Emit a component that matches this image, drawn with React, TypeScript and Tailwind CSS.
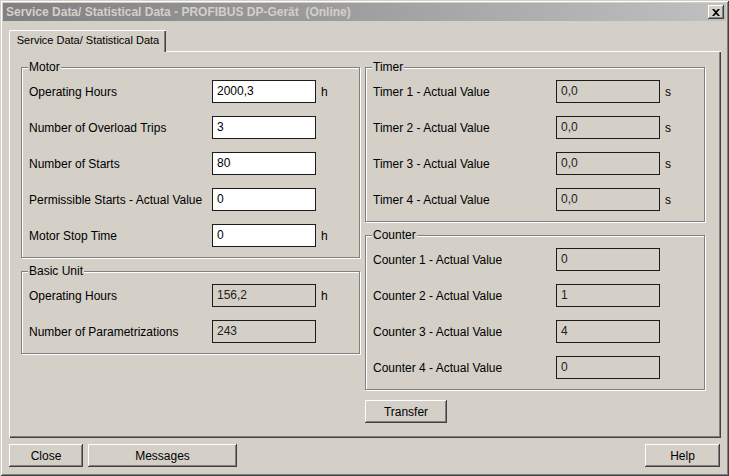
import React from "react";

const font = { fontFamily: '"Liberation Sans", Arial, sans-serif' };

function Btn({ label, w }: { label: string; w: string }) {
  return (
    <div
      className={`${w} h-[23px] flex items-center justify-center text-[12px] text-black bg-[#d4d0c8] shadow-[inset_-1px_-1px_0_#404040,inset_1px_1px_0_#ffffff,inset_-2px_-2px_0_#808080]`}
    >
      {label}
    </div>
  );
}

function Field({ value, editable }: { value: string; editable?: boolean }) {
  return (
    <div
      className={`w-[104px] h-[23px] border border-[#1c1c1c] px-[4px] pt-[2px] text-[12px] leading-[16px] ${
        editable ? "bg-white text-black" : "bg-[#d4d0c8] text-[#222222]"
      }`}
    >
      {value}
    </div>
  );
}

function Row({
  label,
  value,
  unit,
  editable,
}: {
  label: string;
  value: string;
  unit?: string;
  editable?: boolean;
}) {
  return (
    <div className="flex items-center h-[23px]">
      <div className="w-[183px] text-[12px] text-black whitespace-nowrap">{label}</div>
      <Field value={value} editable={editable} />
      {unit && <div className="ml-[5px] text-[12px] text-black">{unit}</div>}
    </div>
  );
}

function Group({
  title,
  children,
}: {
  title: string;
  children: React.ReactNode;
}) {
  return (
    <div className="relative border border-[#808080] shadow-[inset_1px_1px_0_#ffffff,1px_1px_0_#ffffff] pl-[7px] pt-[12px] pb-[10px] flex flex-col gap-[13px]">
      <div className="absolute left-[6px] top-[-8px] px-[1px] bg-[#d4d0c8] text-[12px] leading-[14px] text-black">
        {title}
      </div>
      {children}
    </div>
  );
}

export default function App() {
  return (
    <div
      style={font}
      className="w-[729px] h-[476px] bg-[#d4d0c8] flex flex-col shadow-[inset_1px_1px_0_#d4d0c8,inset_-1px_-1px_0_#404040,inset_2px_2px_0_#ffffff,inset_-2px_-2px_0_#808080] overflow-hidden"
    >
      {/* Title bar */}
      <div className="mx-[3px] mt-[3px] h-[18px] bg-gradient-to-r from-[#808080] to-[#c0c0c0] flex items-center justify-between pl-[3px] pr-[2px]">
        <div className="text-[12px] font-bold text-[#d4d0c8] whitespace-nowrap leading-[14px]">
          Service Data/ Statistical Data - PROFIBUS DP-Gerät&nbsp; (Online)
        </div>
        <div className="w-[16px] h-[14px] bg-[#d4d0c8] flex items-center justify-center shadow-[inset_-1px_-1px_0_#404040,inset_1px_1px_0_#ffffff,inset_-2px_-2px_0_#808080]">
          <svg width="8" height="7" viewBox="0 0 8 7">
            <path d="M0 0h2l2 2 2-2h2L5 3.5 8 7H6L4 5 2 7H0l3-3.5z" fill="#000" />
          </svg>
        </div>
      </div>

      {/* Tab area */}
      <div className="px-[9px] pt-[9px] w-[721px]">
        <div className="relative z-10 -mb-[1px] w-[157px] h-[22px] pb-[2px] bg-[#d4d0c8] flex items-center justify-center text-[11px] text-black border-t border-l border-white shadow-[inset_-1px_0_0_#404040,inset_-2px_0_0_#808080] rounded-tl-[2px]">
          Service Data/ Statistical Data
        </div>
        <div className="h-[387px] w-[712px] border-t border-l border-white shadow-[inset_-1px_-1px_0_#404040,inset_-2px_-2px_0_#808080] pl-[11px] pr-[15px] pt-[15px] flex gap-[5px]">
          {/* Left column */}
          <div className="w-[339px] flex flex-col gap-[13px]">
            <Group title="Motor">
              <Row label="Operating Hours" value="2000,3" unit="h" editable />
              <Row label="Number of Overload Trips" value="3" editable />
              <Row label="Number of Starts" value="80" editable />
              <Row label="Permissible Starts - Actual Value" value="0" editable />
              <Row label="Motor Stop Time" value="0" unit="h" editable />
            </Group>
            <Group title="Basic Unit">
              <Row label="Operating Hours" value="156,2" unit="h" />
              <Row label="Number of Parametrizations" value="243" />
            </Group>
          </div>
          {/* Right column */}
          <div className="w-[340px] flex flex-col gap-[13px]">
            <Group title="Timer">
              <Row label="Timer 1 - Actual Value" value="0,0" unit="s" />
              <Row label="Timer 2 - Actual Value" value="0,0" unit="s" />
              <Row label="Timer 3 - Actual Value" value="0,0" unit="s" />
              <Row label="Timer 4 - Actual Value" value="0,0" unit="s" />
            </Group>
            <Group title="Counter">
              <Row label="Counter 1 - Actual Value" value="0" />
              <Row label="Counter 2 - Actual Value" value="1" />
              <Row label="Counter 3 - Actual Value" value="4" />
              <Row label="Counter 4 - Actual Value" value="0" />
            </Group>
            <div className="-mt-[3px]">
              <Btn label="Transfer" w="w-[82px]" />
            </div>
          </div>
        </div>
      </div>

      {/* Bottom buttons */}
      <div className="px-[9px] pt-[6px] w-[729px] flex items-center">
        <Btn label="Close" w="w-[74px]" />
        <div className="w-[5px]" />
        <Btn label="Messages" w="w-[149px]" />
        <div className="flex-1" />
        <Btn label="Help" w="w-[75px]" />
      </div>
    </div>
  );
}
